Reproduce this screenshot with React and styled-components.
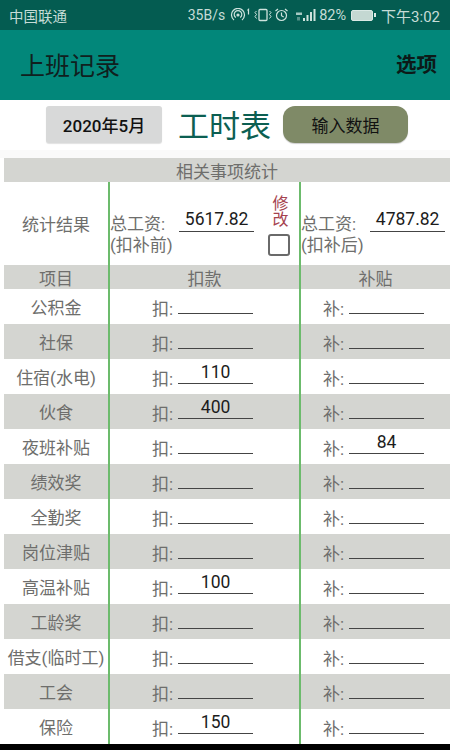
import React from "react";
import styled, { createGlobalStyle } from "styled-components";

const rows = [
  { name: "公积金" },
  { name: "社保" },
  { name: "住宿(水电)", minus: "110" },
  { name: "伙食", minus: "400" },
  { name: "夜班补贴", plus: "84" },
  { name: "绩效奖" },
  { name: "全勤奖" },
  { name: "岗位津贴" },
  { name: "高温补贴", minus: "100" },
  { name: "工龄奖" },
  { name: "借支(临时工)" },
  { name: "工会" },
  { name: "保险", minus: "150" },
];

const StatusIcons = () => (
  <IconRow>
    <svg width="22" height="14" viewBox="0 0 22 14" fill="none" stroke="#cfe3de" strokeWidth="1.2">
      <path d="M4 12a6.5 6.5 0 1 1 8 0" />
      <path d="M5.8 9.5a3.8 3.8 0 1 1 4.4 0" />
      <circle cx="8" cy="7" r="1" fill="#cfe3de" />
      <path d="M17.5 2.5l1-1v5" />
    </svg>
    <svg width="18" height="14" viewBox="0 0 18 14" fill="none" stroke="#cfe3de" strokeWidth="1.3">
      <rect x="5" y="1.5" width="8" height="11" rx="1" />
      <path d="M2.5 3l-1.5 1.5 1.5 2-1.5 2 1.5 2M15.5 3l1.5 1.5-1.5 2 1.5 2-1.5 2" strokeWidth="1" />
    </svg>
    <svg width="15" height="14" viewBox="0 0 15 14" fill="none" stroke="#cfe3de" strokeWidth="1.2">
      <circle cx="7.5" cy="7.5" r="5" />
      <path d="M7.5 4.5v3.2l2.2 1.3M1.5 3l2.5-2M13.5 3L11 1" />
    </svg>
    <svg width="22" height="14" viewBox="0 0 22 14" fill="#cfe3de">
      <rect x="0" y="4.5" width="6" height="2.5" opacity="0.8" />
      <rect x="1" y="9" width="3" height="3.5" opacity="0.4" />
      <rect x="7" y="10" width="2" height="3" />
      <rect x="10.5" y="7" width="2" height="6" />
      <rect x="14" y="4" width="2" height="9" />
      <rect x="17.5" y="1" width="2" height="12" />
    </svg>
  </IconRow>
);

const Amount = ({ label, value, gap }) => (
  <AmountCell $inset={gap}>
    <AmountLabel>{label}:</AmountLabel>
    <AmountLine>{value}</AmountLine>
  </AmountCell>
);

export default function App() {
  return (
    <Page>
      <GlobalStyle />
      <StatusBar>
        <Carrier>中国联通</Carrier>
        <StatusRight>
          <span>35B/s</span>
          <StatusIcons />
          <Percent>82%</Percent>
          <Battery />
          <Clock>下午3:02</Clock>
        </StatusRight>
      </StatusBar>
      <AppBar>
        <AppTitle>上班记录</AppTitle>
        <AppMenu>选项</AppMenu>
      </AppBar>
      <Toolbar>
        <MonthButton>2020年5月</MonthButton>
        <SheetTitle>工时表</SheetTitle>
        <InputButton>输入数据</InputButton>
      </Toolbar>
      <Sheet>
        <Banner>相关事项统计</Banner>
        <StatsRow>
          <NameCell>统计结果</NameCell>
          <StatsMiddle>
            <Total>
              <TotalTop>
                <span>总工资:</span>
                <TotalValue>5617.82</TotalValue>
              </TotalTop>
              <span>(扣补前)</span>
            </Total>
            <EditBox>
              <EditLabel>修改</EditLabel>
              <CheckBox />
            </EditBox>
          </StatsMiddle>
          <StatsRight>
            <Total>
              <TotalTop>
                <span>总工资:</span>
                <TotalValue>4787.82</TotalValue>
              </TotalTop>
              <span>(扣补后)</span>
            </Total>
          </StatsRight>
        </StatsRow>
        <HeadRow>
          <HeadCell>项目</HeadCell>
          <HeadCell $lined>扣款</HeadCell>
          <HeadCell $lined>补贴</HeadCell>
        </HeadRow>
        {rows.map((row, i) => (
          <DataRow key={row.name} $gray={i % 2 === 1}>
            <NameCell>{row.name}</NameCell>
            <Amount label="扣" value={row.minus} gap={42} />
            <Amount label="补" value={row.plus} gap={22} />
          </DataRow>
        ))}
      </Sheet>
    </Page>
  );
}

const GlobalStyle = createGlobalStyle`
  html, body {
    margin: 0;
    padding: 0;
    background: #000;
  }
  * {
    box-sizing: border-box;
  }
`;

const Page = styled.div`
  width: 450px;
  height: 750px;
  overflow: hidden;
  background: #000;
  font-family: "Roboto", "Noto Sans CJK SC", sans-serif;
`;

const StatusBar = styled.div`
  height: 30px;
  padding: 0 10px 0 9px;
  background: #045c51;
  color: #c6dcd7;
  font-size: 14px;
  display: flex;
  align-items: center;
  justify-content: space-between;
`;

const Carrier = styled.span`
  font-size: 14.5px;
`;

const StatusRight = styled.div`
  display: flex;
  align-items: center;
  gap: 4px;
`;

const IconRow = styled.div`
  display: flex;
  align-items: center;
  gap: 2px;
  margin-left: 1px;
  svg:last-child {
    margin-left: 5px;
  }
`;

const Percent = styled.span`
  font-size: 14.5px;
  margin-left: -3px;
`;

const Battery = styled.div`
  width: 22px;
  height: 11px;
  margin: 0 4px 0 1px;
  border: 1.5px solid #dbe9e5;
  border-radius: 2px;
  background: #c4d8d2;
  position: relative;
  &::after {
    content: "";
    position: absolute;
    right: -4px;
    top: 2px;
    width: 2px;
    height: 4px;
    background: #dbe9e5;
  }
`;

const Clock = styled.span`
  font-size: 15px;
`;

const AppBar = styled.div`
  height: 70px;
  padding: 0 13px 0 20px;
  background: #02877a;
  display: flex;
  align-items: center;
  justify-content: space-between;
`;

const AppTitle = styled.div`
  font-size: 25px;
  color: #10201e;
  margin-top: -2px;
`;

const AppMenu = styled.div`
  font-size: 20.5px;
  font-weight: 700;
  margin-top: -4px;
  color: #0c1a18;
`;

const Toolbar = styled.div`
  height: 50px;
  padding: 6px 0 0 46px;
  background: #fff;
  display: flex;
  align-items: flex-start;
`;

const MonthButton = styled.div`
  width: 116px;
  height: 37px;
  border-radius: 3px;
  background: #d8d9d9;
  box-shadow: 0 1px 1px rgba(0, 0, 0, 0.12);
  color: #111;
  font-size: 17px;
  font-weight: 500;
  display: flex;
  align-items: center;
  justify-content: center;
`;

const SheetTitle = styled.div`
  width: 121px;
  height: 37px;
  padding-left: 4px;
  color: #0c5f52;
  font-size: 31px;
  line-height: 37px;
  text-align: center;
  margin-top: 2px;
`;

const InputButton = styled.div`
  width: 125px;
  height: 37px;
  border-radius: 12px;
  background: #7f8a67;
  box-shadow: 0 1px 1px rgba(0, 0, 0, 0.2);
  color: #111;
  font-size: 17px;
  display: flex;
  align-items: center;
  justify-content: center;
`;

const Sheet = styled.div`
  height: 600px;
  padding: 8px 0 6px 4px;
  background: linear-gradient(#fafafa 8px, #fff 8px, #fff 594px, #000 594px);
  color: #6e6e6c;
  font-size: 17px;
`;

const Banner = styled.div`
  height: 24px;
  background: #d4d5d1;
  display: flex;
  align-items: center;
  justify-content: center;
`;

const Grid = styled.div`
  display: grid;
  grid-template-columns: 104px 191px 151px;
`;

const StatsRow = styled(Grid)`
  height: 83px;
  background: #fff;
`;

const HeadRow = styled(Grid)`
  height: 24px;
  background: #d4d5d1;
`;

const DataRow = styled(Grid)`
  height: 35px;
  background: ${props => (props.$gray ? "#d4d5d1" : "#fff")};
`;

const NameCell = styled.div`
  display: flex;
  align-items: center;
  justify-content: center;
  white-space: nowrap;
`;

const HeadCell = styled.div`
  display: flex;
  align-items: center;
  justify-content: center;
  border-left: ${props => (props.$lined ? "2px solid #6cbb6c" : "none")};
`;

const StatsMiddle = styled.div`
  border-left: 2px solid #6cbb6c;
  display: flex;
`;

const StatsRight = styled.div`
  border-left: 2px solid #6cbb6c;
  display: flex;
`;

const Total = styled.div`
  width: 148px;
  flex: none;
  padding-top: 31px;
  line-height: 21px;
  display: flex;
  flex-direction: column;
  white-space: nowrap;
`;

const TotalTop = styled.div`
  display: flex;
  align-items: flex-end;
  gap: 14px;
`;

const TotalValue = styled.div`
  width: 75px;
  height: 23px;
  margin-top: -4px;
  margin-bottom: 3px;
  border-bottom: 1px solid #444;
  color: #1c1c1c;
  font-size: 17.5px;
  line-height: 20px;
  text-align: center;
`;

const EditBox = styled.div`
  display: flex;
  flex-direction: column;
  align-items: center;
  width: 41px;
  padding-top: 13px;
`;

const EditLabel = styled.div`
  writing-mode: vertical-rl;
  height: 32px;
  color: #a5424e;
  font-size: 16px;
  line-height: 16px;
`;

const CheckBox = styled.div`
  width: 22px;
  height: 22px;
  margin-top: 7px;
  border: 2.5px solid #6a6a6a;
  border-radius: 3px;
`;

const AmountCell = styled.div`
  border-left: 2px solid #6cbb6c;
  padding: 0 0 4px ${props => props.$inset}px;
  display: flex;
  align-items: flex-end;
  gap: 5px;
`;

const AmountLabel = styled.span`
  line-height: 22px;
  white-space: nowrap;
`;

const AmountLine = styled.div`
  width: 75px;
  height: 23px;
  margin-bottom: 6px;
  border-bottom: 1px solid #444;
  color: #1c1c1c;
  font-size: 17.5px;
  line-height: 22px;
  text-align: center;
`;
